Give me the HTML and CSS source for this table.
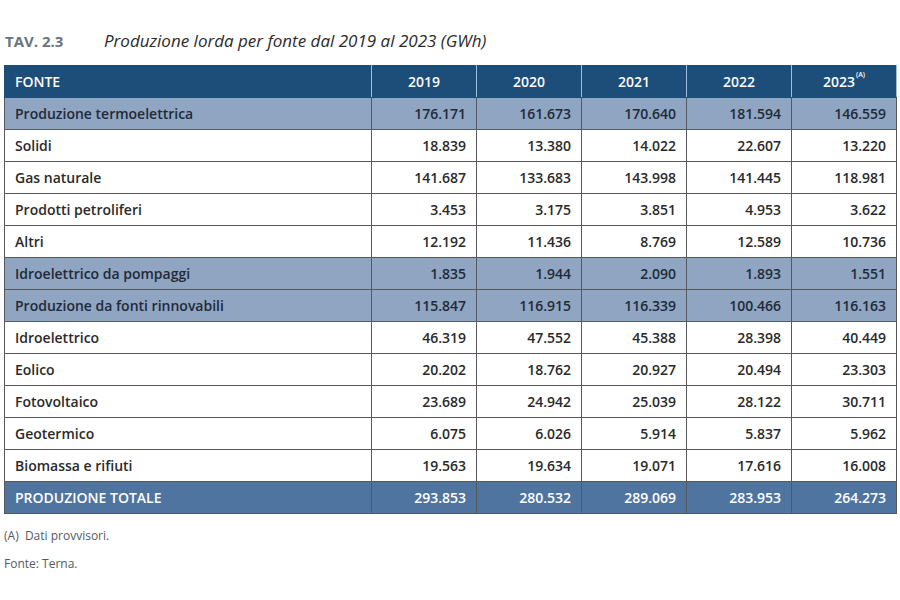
FILE: index.html
```html
<!DOCTYPE html>
<html lang="it">
<head>
<meta charset="utf-8">
<title>TAV. 2.3</title>
<link rel="stylesheet" href="styles.css">
</head>
<body>
<div class="page">
  <div class="caption">
    <span class="tav">TAV. 2.3</span>
    <span class="title">Produzione lorda per fonte dal 2019 al 2023 (GWh)</span>
  </div>
  <table class="data">
    <colgroup>
      <col class="c-name"><col class="c-y"><col class="c-y"><col class="c-y"><col class="c-y"><col class="c-y">
    </colgroup>
    <thead>
      <tr class="head">
        <th class="name">FONTE</th><th>2019</th><th>2020</th><th>2021</th><th>2022</th><th>2023<sup>(A)</sup></th>
      </tr>
    </thead>
    <tbody>
      <tr class="group"><td class="name">Produzione termoelettrica</td><td>176.171</td><td>161.673</td><td>170.640</td><td>181.594</td><td>146.559</td></tr>
      <tr><td class="name">Solidi</td><td>18.839</td><td>13.380</td><td>14.022</td><td>22.607</td><td>13.220</td></tr>
      <tr><td class="name">Gas naturale</td><td>141.687</td><td>133.683</td><td>143.998</td><td>141.445</td><td>118.981</td></tr>
      <tr><td class="name">Prodotti petroliferi</td><td>3.453</td><td>3.175</td><td>3.851</td><td>4.953</td><td>3.622</td></tr>
      <tr><td class="name">Altri</td><td>12.192</td><td>11.436</td><td>8.769</td><td>12.589</td><td>10.736</td></tr>
      <tr class="group"><td class="name">Idroelettrico da pompaggi</td><td>1.835</td><td>1.944</td><td>2.090</td><td>1.893</td><td>1.551</td></tr>
      <tr class="group"><td class="name">Produzione da fonti rinnovabili</td><td>115.847</td><td>116.915</td><td>116.339</td><td>100.466</td><td>116.163</td></tr>
      <tr><td class="name">Idroelettrico</td><td>46.319</td><td>47.552</td><td>45.388</td><td>28.398</td><td>40.449</td></tr>
      <tr><td class="name">Eolico</td><td>20.202</td><td>18.762</td><td>20.927</td><td>20.494</td><td>23.303</td></tr>
      <tr><td class="name">Fotovoltaico</td><td>23.689</td><td>24.942</td><td>25.039</td><td>28.122</td><td>30.711</td></tr>
      <tr><td class="name">Geotermico</td><td>6.075</td><td>6.026</td><td>5.914</td><td>5.837</td><td>5.962</td></tr>
      <tr><td class="name">Biomassa e rifiuti</td><td>19.563</td><td>19.634</td><td>19.071</td><td>17.616</td><td>16.008</td></tr>
      <tr class="total"><td class="name">PRODUZIONE TOTALE</td><td>293.853</td><td>280.532</td><td>289.069</td><td>283.953</td><td>264.273</td></tr>
    </tbody>
  </table>
  <p class="note">(A)&nbsp; Dati provvisori.</p>
  <p class="note">Fonte: Terna.</p>
</div>
</body>
</html>
```
FILE: styles.css
```css
html, body {
  margin: 0;
  padding: 0;
  background: #ffffff;
}
body {
  font-family: "Open Sans", "Noto Sans", sans-serif;
  color: #2a2a2a;
}
.page {
  padding: 29px 4px 0 4px;
}
.caption {
  display: flex;
  align-items: baseline;
  height: 26px;
  padding-left: 1px;
  margin-bottom: 10px;
}
.tav {
  font-weight: 700;
  font-size: 15px;
  color: #6b7380;
  width: 99px;
}
.title {
  font-style: italic;
  font-size: 17px;
  color: #2b2b2b;
}
.data {
  border-collapse: collapse;
  width: 892px;
  table-layout: fixed;
  border: 1px solid #4a4d52;
}
.c-name { width: 367px; }
.c-y { width: 105px; }
.data th,
.data td {
  height: 32px;
  padding: 0 10px 0 10px;
  font-size: 14px;
  font-weight: 600;
  text-align: right;
  border: 1px solid #55585c;
  white-space: nowrap;
  box-sizing: border-box;
}
.data .name {
  text-align: left;
}
.head th {
  background: #1d4d79;
  color: #ffffff;
  text-align: center;
  padding: 0 6px;
  border-color: #1d4d79;
  border-left: 1px solid #9bbfe0;
  border-right: 1px solid #9bbfe0;
}
.head th.name {
  text-align: left;
  padding-left: 10px;
  border-left-color: #1d4d79;
}
.head sup {
  font-size: 7px;
  vertical-align: top;
  position: relative;
  top: -2px;
  margin-left: 1px;
}
.group td {
  background: #8fa5c1;
  color: #1f2a38;
}
.total td {
  background: #4f74a0;
  color: #ffffff;
}
.note {
  margin: 0;
  font-size: 12px;
  color: #555a60;
  padding-left: 0;
}
.note:first-of-type {
  margin-top: 13px;
}
.note + .note {
  margin-top: 11px;
}
```
